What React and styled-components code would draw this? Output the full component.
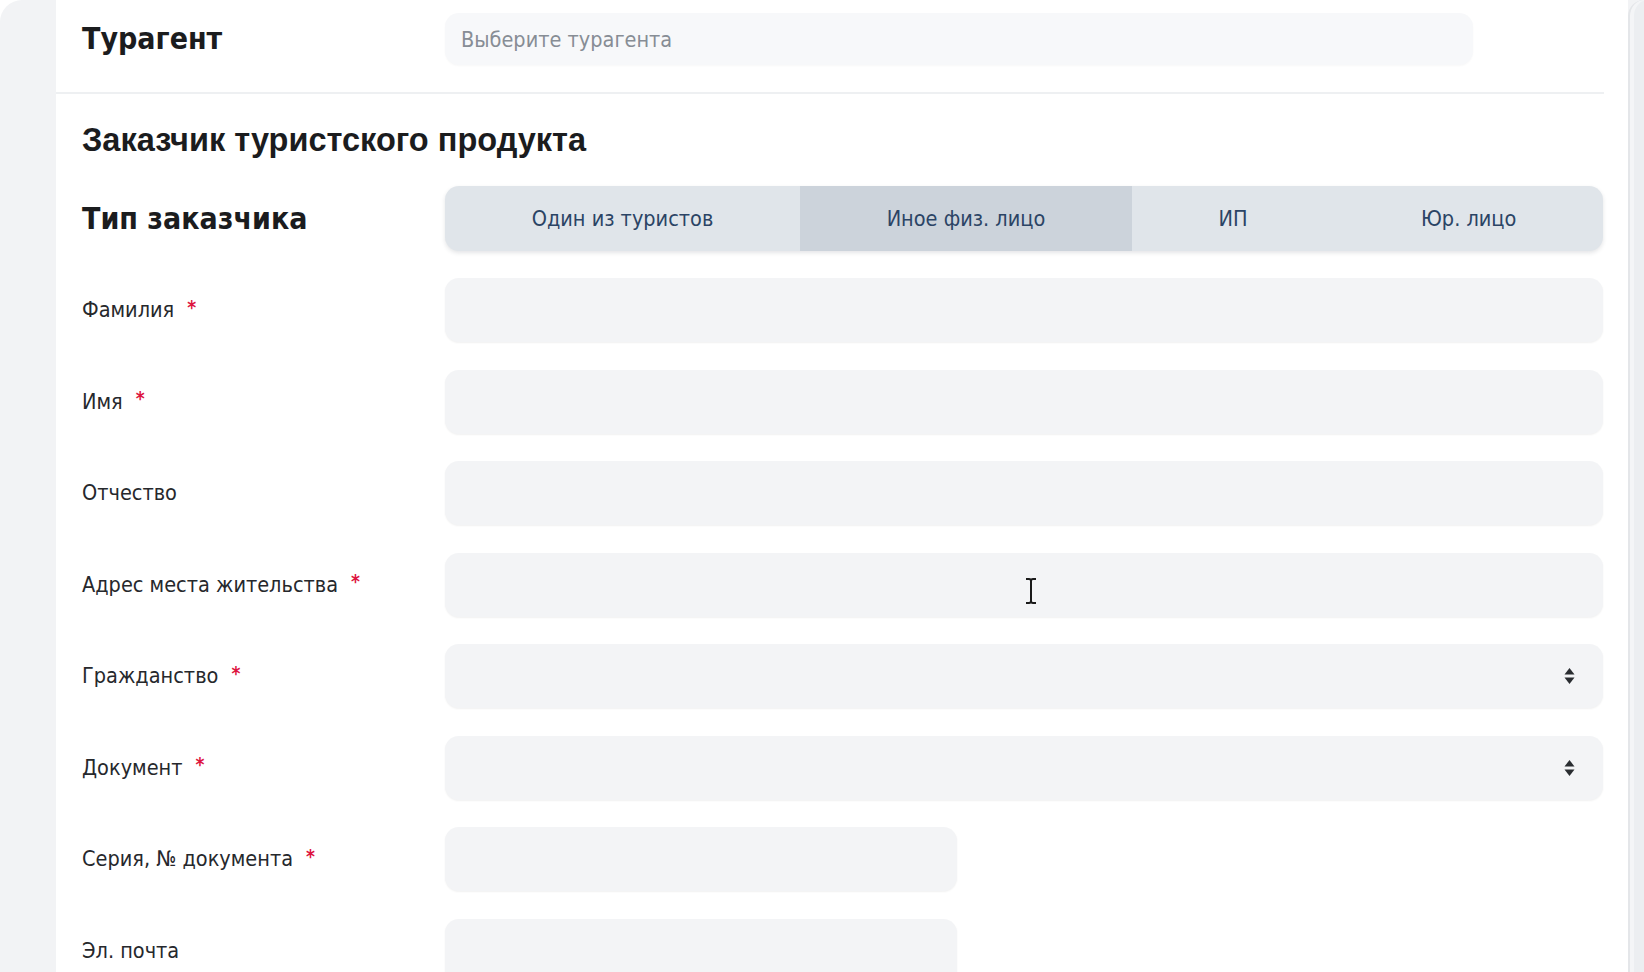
import React from "react";
import styled, { createGlobalStyle } from "styled-components";

const GlobalStyle = createGlobalStyle`
  html, body {
    margin: 0;
    padding: 0;
    background: #ffffff;
    overflow: hidden;
  }
  * {
    box-sizing: border-box;
  }
`;

const COND = `"DejaVu Sans Condensed", "DejaVu Sans", sans-serif`;

const segments = ["Один из туристов", "Иное физ. лицо", "ИП", "Юр. лицо"];

const fields = [
  { label: "Фамилия", required: true },
  { label: "Имя", required: true },
  { label: "Отчество" },
  { label: "Адрес места жительства", required: true, cursor: true },
  { label: "Гражданство", required: true, select: true },
  { label: "Документ", required: true, select: true },
  { label: "Серия, № документа", required: true, short: true },
  { label: "Эл. почта", short: true },
];

function SortIcon() {
  return (
    <svg width="11" height="18" viewBox="0 0 11 18">
      <path d="M5.5 1 L10.5 7.5 L0.5 7.5 Z" fill="#2a2d31" />
      <path d="M5.5 17 L10.5 10.5 L0.5 10.5 Z" fill="#2a2d31" />
    </svg>
  );
}

function IBeam() {
  return (
    <svg width="14" height="28" viewBox="0 0 14 28">
      <path
        d="M2 2 H5 Q7 2 7 4 V24 Q7 26 9 26 H12 M12 2 H9 Q7 2 7 4 M7 24 Q7 26 5 26 H2"
        stroke="#1a1a1a"
        strokeWidth="2"
        fill="none"
      />
    </svg>
  );
}

export default function App() {
  return (
    <>
      <GlobalStyle />
      <Frame>
        <Card>
          <AgentRow>
            <BigLabel>Турагент</BigLabel>
            <AgentSelect>Выберите турагента</AgentSelect>
          </AgentRow>

          <Section>
            <SectionTitle>Заказчик туристского продукта</SectionTitle>

            <TypeRow>
              <BigLabel>Тип заказчика</BigLabel>
              <Segmented>
                {segments.map((s, i) => (
                  <Segment key={s} $active={i === 1}>
                    {s}
                  </Segment>
                ))}
              </Segmented>
            </TypeRow>

            <Fields>
              {fields.map((f) => (
                <FieldRow key={f.label}>
                  <Label>
                    {f.label}
                    {f.required && <Star>*</Star>}
                  </Label>
                  <Input $short={f.short}>
                    {f.select && (
                      <SelectIcon>
                        <SortIcon />
                      </SelectIcon>
                    )}
                    {f.cursor && (
                      <Cursor>
                        <IBeam />
                      </Cursor>
                    )}
                  </Input>
                </FieldRow>
              ))}
            </Fields>
          </Section>
        </Card>
        <RightRail />
      </Frame>
    </>
  );
}

const Frame = styled.div`
  display: flex;
  height: 972px;
  padding-left: 56px;
  background: #f2f3f5;
  border-top-left-radius: 22px;
  overflow: hidden;
`;

const Card = styled.main`
  flex: 1;
  background: #ffffff;
`;

const RightRail = styled.div`
  width: 16px;
  background: #eceef1;
  border-top-left-radius: 16px;
  border-left: 2px solid #e4e6e9;
  box-shadow: inset 4px 0 0 #f4f5f7;
`;

const AgentRow = styled.div`
  display: grid;
  grid-template-columns: 363px 1028px;
  grid-template-rows: 52px;
  align-items: center;
  height: 94px;
  padding: 13px 0 0 26px;
  margin-right: 24px;
  border-bottom: 2px solid #eef0f2;
`;

const BigLabel = styled.h2`
  margin: 0;
  font-family: ${COND};
  font-stretch: condensed;
  font-weight: 700;
  font-size: 30px;
  line-height: 36px;
  color: #1b1c1e;
`;

const AgentSelect = styled.div`
  height: 52px;
  border-radius: 14px;
  background: #f7f8fa;
  display: flex;
  align-items: center;
  padding-left: 16px;
  font-family: ${COND};
  font-stretch: condensed;
  font-size: 21.5px;
  color: #878d95;
  box-shadow: 0 1px 2px rgba(0, 0, 0, 0.03);
`;

const Section = styled.section`
  padding: 27px 25px 0 26px;
`;

const SectionTitle = styled.h1`
  margin: 0 0 27px;
  font-family: "Liberation Sans", Arial, sans-serif;
  font-weight: 700;
  font-size: 32.5px;
  line-height: 38px;
  color: #1b1c1e;
`;

const TypeRow = styled.div`
  display: grid;
  grid-template-columns: 363px 1fr;
  align-items: center;
`;

const Segmented = styled.div`
  display: flex;
  height: 65px;
  border-radius: 14px;
  overflow: hidden;
  background: #e0e5ea;
  box-shadow: 0 2px 4px rgba(30, 40, 60, 0.12);
`;

const Segment = styled.div`
  flex: 1 1 auto;
  display: flex;
  align-items: center;
  justify-content: center;
  font-family: ${COND};
  font-stretch: condensed;
  font-size: 21.5px;
  color: #2b4465;
  background: ${(p) => (p.$active ? "#ccd3db" : "transparent")};
`;

const Fields = styled.div`
  display: flex;
  flex-direction: column;
  gap: 27.5px;
  margin-top: 27px;
`;

const FieldRow = styled.div`
  display: grid;
  grid-template-columns: 363px 1fr;
  align-items: center;
`;

const Label = styled.label`
  display: flex;
  align-items: center;
  font-family: ${COND};
  font-stretch: condensed;
  font-size: 21.5px;
  line-height: 28px;
  color: #26282c;
`;

const Star = styled.span`
  margin-left: 13px;
  margin-top: -6px;
  font-size: 19px;
  line-height: 19px;
  font-weight: 700;
  color: #dd1440;
`;

const Input = styled.div`
  position: relative;
  height: 64px;
  width: ${(p) => (p.$short ? "512px" : "100%")};
  border-radius: 14px;
  background: #f3f4f6;
  box-shadow: 0 1px 2px rgba(0, 0, 0, 0.06);
  display: flex;
  align-items: center;
  justify-content: flex-end;
`;

const SelectIcon = styled.span`
  display: flex;
  margin-right: 28px;
`;

const Cursor = styled.span`
  position: absolute;
  left: 579px;
  top: 24px;
  display: flex;
`;
